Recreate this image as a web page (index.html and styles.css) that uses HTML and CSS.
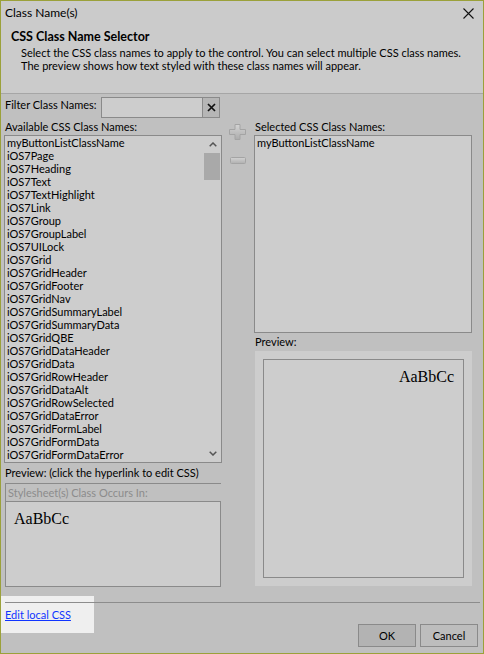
FILE: index.html
```html
<!DOCTYPE html>
<html lang="en">
<head>
<meta charset="utf-8">
<title>Class Name(s)</title>
<link rel="stylesheet" href="styles.css">
</head>
<body>
<div class="dialog">
  <div class="titlebar">
    <span class="title">Class Name(s)</span>
    <svg class="close" width="11" height="11" viewBox="0 0 11 11" aria-hidden="true">
      <path d="M0.5 0.5L10.5 10.5M10.5 0.5L0.5 10.5" stroke="#111" stroke-width="1.1" fill="none"/>
    </svg>
  </div>

  <div class="header">
    <div class="header-title">CSS Class Name Selector</div>
    <div class="header-desc">Select the CSS class names to apply to the control. You can select multiple CSS class names.<br>The preview shows how text styled with these class names will appear.</div>
  </div>

  <div class="content">
    <div class="filter-row">
      <span class="filter-label">Filter Class Names:</span>
      <div class="filter-input">
        <span class="clear-btn">
          <svg width="9" height="9" viewBox="0 0 9 9" aria-hidden="true">
            <path d="M1 1L8 8M8 1L1 8" stroke="#111" stroke-width="1.7" fill="none"/>
          </svg>
        </span>
      </div>
    </div>

    <div class="columns">
      <div class="col-left">
        <div class="field-label">Available CSS Class Names:</div>
        <div class="listbox">
          <ul class="items">
            <li>myButtonListClassName</li>
            <li>iOS7Page</li>
            <li>iOS7Heading</li>
            <li>iOS7Text</li>
            <li>iOS7TextHighlight</li>
            <li>iOS7Link</li>
            <li>iOS7Group</li>
            <li>iOS7GroupLabel</li>
            <li>iOS7UILock</li>
            <li>iOS7Grid</li>
            <li>iOS7GridHeader</li>
            <li>iOS7GridFooter</li>
            <li>iOS7GridNav</li>
            <li>iOS7GridSummaryLabel</li>
            <li>iOS7GridSummaryData</li>
            <li>iOS7GridQBE</li>
            <li>iOS7GridDataHeader</li>
            <li>iOS7GridData</li>
            <li>iOS7GridRowHeader</li>
            <li>iOS7GridDataAlt</li>
            <li>iOS7GridRowSelected</li>
            <li>iOS7GridDataError</li>
            <li>iOS7GridFormLabel</li>
            <li>iOS7GridFormData</li>
            <li>iOS7GridFormDataError</li>
          </ul>
          <div class="scrollbar">
            <span class="sb-btn">
              <svg width="8" height="5" viewBox="0 0 8 5" aria-hidden="true"><path d="M0.7 4.3L4 1L7.3 4.3" stroke="#555" stroke-width="1.5" fill="none"/></svg>
            </span>
            <span class="thumb"></span>
            <span class="track"></span>
            <span class="sb-btn">
              <svg width="8" height="5" viewBox="0 0 8 5" aria-hidden="true"><path d="M0.7 0.7L4 4L7.3 0.7" stroke="#555" stroke-width="1.5" fill="none"/></svg>
            </span>
          </div>
        </div>
        <div class="preview-label">Preview: (click the hyperlink to edit CSS)</div>
        <div class="group-label">Stylesheet(s) Class Occurs In:</div>
        <div class="group-box"><span class="sample">AaBbCc</span></div>
      </div>

      <div class="col-mid">
        <svg class="icon-add" width="17" height="16" viewBox="0 0 17 16" aria-hidden="true">
          <defs>
            <linearGradient id="addFill" x1="0" y1="0" x2="0" y2="1">
              <stop offset="0" stop-color="#d4d4d4"/>
              <stop offset="1" stop-color="#acacac"/>
            </linearGradient>
          </defs>
          <path d="M6 0.5H11V5.5H16.5V10.5H11V15.5H6V10.5H0.5V5.5H6Z" fill="url(#addFill)" stroke="#a4a4a4"/>
        </svg>
        <svg class="icon-remove" width="16" height="7" viewBox="0 0 16 7" aria-hidden="true">
          <defs>
            <linearGradient id="removeFill" x1="0" y1="0" x2="0" y2="1">
              <stop offset="0" stop-color="#d2d2d2"/>
              <stop offset="1" stop-color="#b0b0b0"/>
            </linearGradient>
          </defs>
          <rect x="0.5" y="0.5" width="15" height="6" rx="1" fill="url(#removeFill)" stroke="#a4a4a4"/>
        </svg>
      </div>

      <div class="col-right">
        <div class="field-label">Selected CSS Class Names:</div>
        <div class="selected-box">myButtonListClassName</div>
        <div class="field-label preview-head">Preview:</div>
        <div class="preview-panel">
          <div class="preview-box"><span class="sample">AaBbCc</span></div>
        </div>
      </div>
    </div>
  </div>

  <div class="footer">
    <div class="link-zone"><a class="link" href="#">Edit local CSS</a></div>
    <div class="buttons">
      <button class="btn btn-default" type="button">OK</button>
      <button class="btn" type="button">Cancel</button>
    </div>
  </div>
</div>
</body>
</html>
```

FILE: styles.css
```css
* {
  box-sizing: border-box;
}

html,
body {
  margin: 0;
  padding: 0;
}

body {
  width: 484px;
  height: 654px;
  background: #c0c0c0;
  font-family: Lato, "Liberation Sans", sans-serif;
  font-size: 11px;
  color: #000;
}

/* window frame */
.dialog {
  width: 484px;
  height: 654px;
  border: 1px solid #9ba13a;
  background: #c0c0c0;
  display: flex;
  flex-direction: column;
}

.titlebar {
  height: 24px;
  flex: none;
  background: #cbcbcb;
  display: flex;
  align-items: center;
  justify-content: space-between;
  padding: 0 9px 0 4px;
}

.title {
  font-size: 12px;
  line-height: 24px;
}

.close {
  display: block;
  margin-top: 1px;
}

/* banner with heading and description */
.header {
  height: 69px;
  flex: none;
  background: #cbcbcb;
  border-bottom: 1px solid #a6a6a6;
  padding: 5px 10px 0 10px;
}

.header-title {
  font-weight: bold;
  font-size: 12.5px;
  line-height: 13px;
}

.header-desc {
  margin-top: 3px;
  padding-left: 10px;
  line-height: 13px;
}

/* main body */
.content {
  padding: 3px 11px 0 3px;
}

.filter-row {
  display: flex;
  height: 21px;
}

.filter-label {
  width: 97px;
  padding: 1px 0 0 1px;
  line-height: 13px;
}

.filter-input {
  width: 119px;
  height: 21px;
  border: 1px solid #8a8a8a;
  background: #cdcdcd;
  display: flex;
  justify-content: flex-end;
}

.clear-btn {
  width: 17px;
  height: 100%;
  border-left: 1px solid #8a8a8a;
  background: #b6b6b6;
  display: flex;
  align-items: center;
  justify-content: center;
}

.clear-btn svg {
  display: block;
}

.columns {
  display: grid;
  grid-template-columns: 218px 32px 218px;
}

.col-left,
.col-right {
  display: flex;
  flex-direction: column;
}

.field-label {
  height: 17px;
  line-height: 17px;
  padding-left: 1px;
  white-space: nowrap;
}

/* available names list with its scrollbar */
.listbox {
  height: 328px;
  border: 1px solid #8a8a8a;
  background: #cdcdcd;
  display: flex;
}

.items {
  flex: 1;
  list-style: none;
  margin: 0;
  padding: 0 0 0 2px;
  line-height: 13px;
  overflow: hidden;
  white-space: nowrap;
}

.scrollbar {
  width: 17px;
  display: flex;
  flex-direction: column;
}

.sb-btn {
  height: 17px;
  flex: none;
  display: flex;
  align-items: center;
  justify-content: center;
}

.sb-btn svg {
  display: block;
}

.thumb {
  height: 27px;
  width: 16px;
  flex: none;
  background: #a9a9a9;
}

.track {
  flex: 1;
}

.preview-label {
  height: 20px;
  line-height: 20px;
  padding-left: 1px;
  white-space: nowrap;
}

.group-label {
  height: 18px;
  margin: 0 1px;
  border-top: 1px solid #8a8a8a;
  border-left: 1px solid #8a8a8a;
  padding-left: 2px;
  line-height: 17px;
  color: #8c8c8c;
  white-space: nowrap;
}

.group-box {
  height: 86px;
  margin: 0 1px;
  border: 1px solid #8a8a8a;
  background: #cdcdcd;
}

.sample {
  display: block;
  padding: 9px 8px;
  font-family: "Liberation Serif", "Times New Roman", serif;
  font-size: 16px;
  line-height: 16px;
  color: #000;
}

/* add / remove arrows between the lists */
.col-mid {
  display: flex;
  flex-direction: column;
  align-items: flex-start;
  padding: 6px 0 0 7px;
}

.icon-add {
  display: block;
}

.icon-remove {
  display: block;
  margin: 17px 0 0 1px;
}

.selected-box {
  height: 198px;
  border: 1px solid #8a8a8a;
  background: #cdcdcd;
  padding: 0 2px;
  line-height: 13px;
}

.preview-head {
  height: 18px;
  line-height: 18px;
}

.preview-panel {
  height: 235px;
  margin-left: 1px;
  background: #cdcdcd;
  padding: 8px;
}

.preview-box {
  height: 100%;
  border: 1px solid #8a8a8a;
  text-align: right;
}

.preview-box .sample {
  padding: 9px 9px 9px 8px;
}

/* bottom strip: link and dialog buttons */
.footer {
  margin-top: auto;
  height: 57px;
  flex: none;
  position: relative;
  display: flex;
  justify-content: space-between;
}

.footer::before {
  content: "";
  position: absolute;
  top: 6px;
  left: 4px;
  right: 3px;
  height: 1px;
  background: #8c8c8c;
}

.link-zone {
  width: 93px;
  height: 37px;
  background: #efefef;
  padding: 12px 0 0 4px;
  line-height: 13px;
}

.link {
  color: #1034ff;
  text-decoration: underline;
}

.buttons {
  align-self: flex-end;
  display: flex;
  gap: 4px;
  padding: 0 5px 6px 0;
}

.btn {
  width: 58px;
  height: 23px;
  margin: 0;
  padding: 0;
  border: 1px solid #8a8a8a;
  border-radius: 0;
  background: #bdbdbd;
  font-family: inherit;
  font-size: 11px;
  line-height: 21px;
  color: #000;
  text-align: center;
}

.btn-default {
  background: #b3b3b3;
}
```
